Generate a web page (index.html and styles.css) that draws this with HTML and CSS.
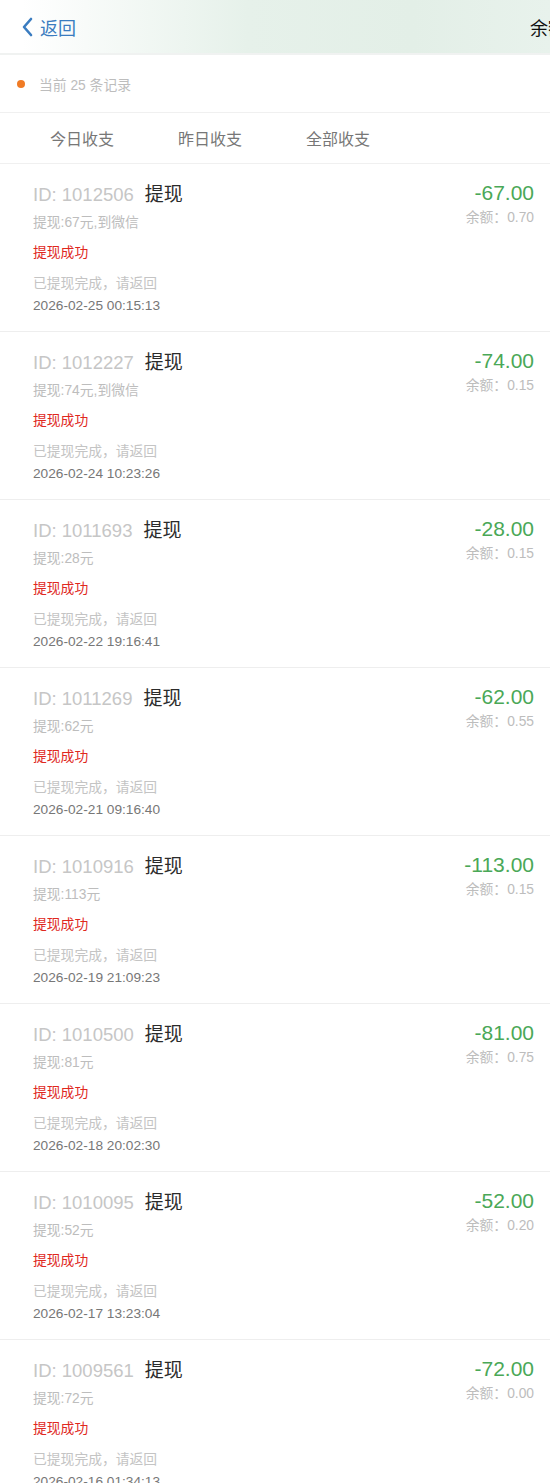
FILE: index.html
```
<html>
    <head>
        <meta charset="utf-8">
        <link rel="stylesheet" href="styles.css">
    </head>
    <body>
        <div class="topbar">
            <a class="back">
                <svg width="12" height="20" viewBox="0 0 12 20"><path d="M10 2 L3 10 L10 18" fill="none" stroke="#3a7cc0" stroke-width="2.6" stroke-linecap="round" stroke-linejoin="round"/></svg>
                <span>返回</span>
            </a>
            <span class="pageTitle">余额明细</span>
        </div>

        <div class="summary">
            <span class="dot"></span>
            <span>当前 25 条记录</span>
        </div>

        <div class="tabs">
            <span class="tab">今日收支</span>
            <span class="tab">昨日收支</span>
            <span class="tab">全部收支</span>
        </div>

        <div id="list"></div>

        <script>
            var rows = [
                ['1012506', '提现:67元,到微信', '2026-02-25 00:15:13', '-67.00', '0.70'],
                ['1012227', '提现:74元,到微信', '2026-02-24 10:23:26', '-74.00', '0.15'],
                ['1011693', '提现:28元', '2026-02-22 19:16:41', '-28.00', '0.15'],
                ['1011269', '提现:62元', '2026-02-21 09:16:40', '-62.00', '0.55'],
                ['1010916', '提现:113元', '2026-02-19 21:09:23', '-113.00', '0.15'],
                ['1010500', '提现:81元', '2026-02-18 20:02:30', '-81.00', '0.75'],
                ['1010095', '提现:52元', '2026-02-17 13:23:04', '-52.00', '0.20'],
                ['1009561', '提现:72元', '2026-02-16 01:34:13', '-72.00', '0.00']
            ];
            var html = '';
            rows.forEach(function(r){
                html += '<div class="record">' +
                    '<div class="left">' +
                        '<div class="head"><span class="rid">ID: ' + r[0] + '</span><span class="kind">提现</span></div>' +
                        '<div class="desc">' + r[1] + '</div>' +
                        '<div class="status">提现成功</div>' +
                        '<div class="note">已提现完成，请返回</div>' +
                        '<div class="time">' + r[2] + '</div>' +
                    '</div>' +
                    '<div class="right">' +
                        '<div class="amount">' + r[3] + '</div>' +
                        '<div class="balance">余额：' + r[4] + '</div>' +
                    '</div>' +
                '</div>';
            });
            document.getElementById('list').innerHTML = html;
        </script>
    </body>
</html>
```

FILE: styles.css
```
body{
    margin: 0;
    background: #fff;
    font-family: "Liberation Sans", "Noto Sans CJK SC", sans-serif;
    overflow-x: hidden;
}
.topbar{
    display: flex;
    align-items: center;
    height: 53px;
    overflow: hidden;
    border-bottom: 2px solid #f0f2f1;
    background: linear-gradient(90deg, #ffffff 4%, #e6f1ea 45%, #e3efe7 75%, #e8f2ec 100%);
}
.back{
    display: flex;
    align-items: center;
    padding-left: 21px;
    color: #3a7cc0;
    font-size: 18px;
}
.back span{
    margin-left: 7px;
}
.pageTitle{
    flex: none;
    margin-left: auto;
    margin-right: -52px;
    font-size: 18px;
    color: #111;
}
.summary{
    display: flex;
    align-items: center;
    height: 57px;
    padding-left: 17px;
    font-size: 13.8px;
    color: #bdbdbd;
    border-bottom: 1px solid #f0f0f0;
}
.dot{
    width: 8px;
    height: 8px;
    border-radius: 50%;
    background: #f07b25;
    margin-right: 14px;
}
.tabs{
    display: flex;
    height: 50px;
    align-items: center;
    padding-left: 18px;
    border-bottom: 1px solid #f0f0f0;
}
.tab{
    width: 128px;
    text-align: center;
    font-size: 16px;
    color: #777;
}
.record{
    display: flex;
    justify-content: space-between;
    height: 149px;
    padding: 18px 16px 0 33px;
    border-bottom: 1px solid #eeeeee;
}
.head{
    line-height: 26px;
    font-size: 19px;
}
.rid{
    color: #c6c6c6;
    font-size: 18.5px;
}
.kind{
    color: #2b2b2b;
    margin-left: 11px;
}
.desc{
    margin-top: 5px;
    line-height: 20px;
    font-size: 13.8px;
    color: #bdbdbd;
}
.status{
    margin-top: 10px;
    line-height: 20px;
    font-size: 13.8px;
    color: #e0281e;
}
.note{
    margin-top: 11px;
    line-height: 20px;
    font-size: 13.8px;
    color: #c4c4c4;
}
.time{
    margin-top: 2px;
    line-height: 20px;
    font-size: 13.7px;
    color: #777;
}
.right{
    text-align: right;
}
.amount{
    line-height: 22px;
    font-size: 21px;
    color: #4aa857;
}
.balance{
    margin-top: 5px;
    line-height: 18px;
    font-size: 13.8px;
    color: #bdbdbd;
}
```
